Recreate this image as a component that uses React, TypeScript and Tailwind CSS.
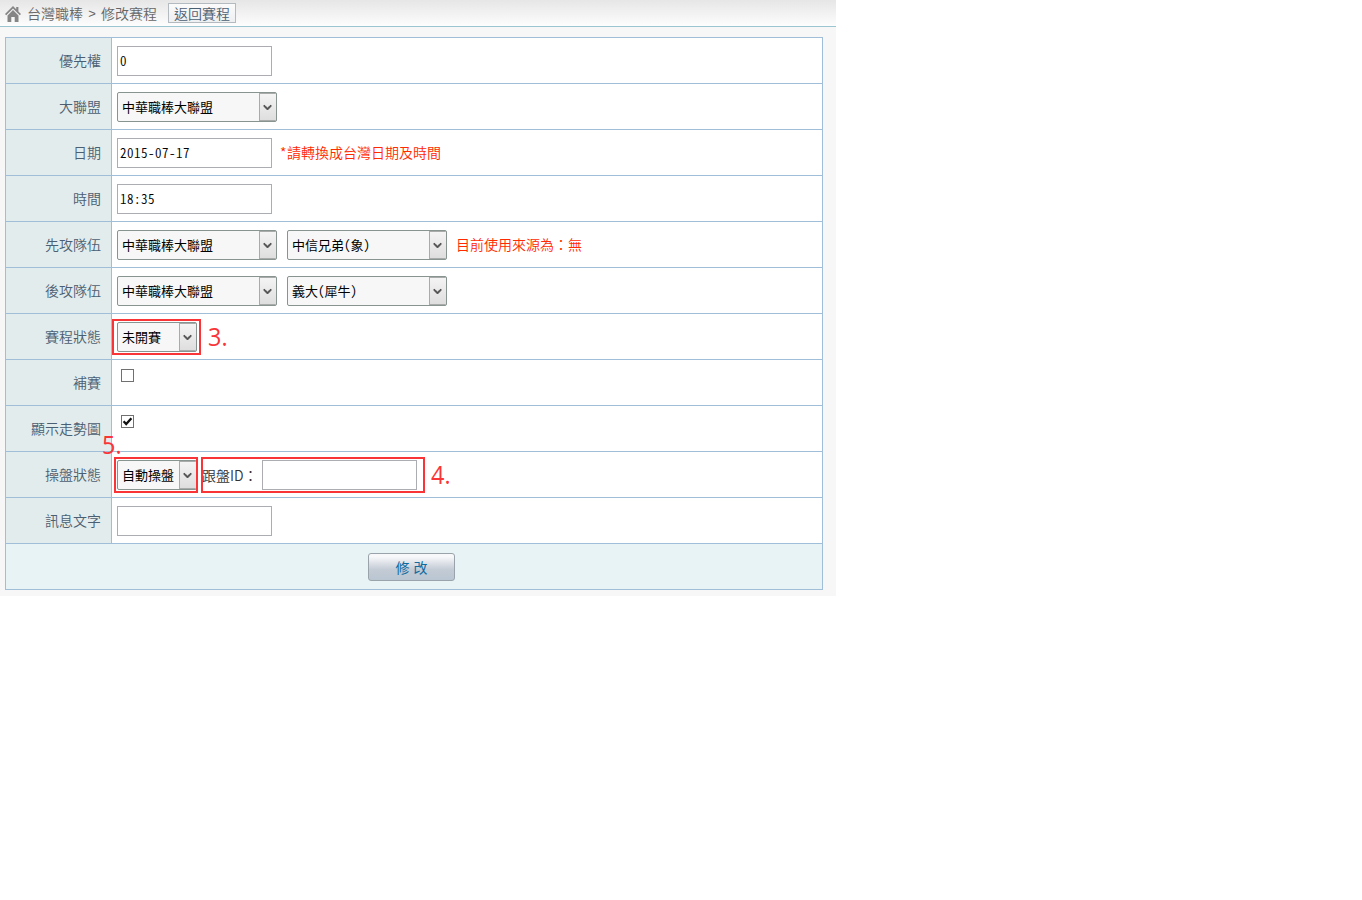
import { useState, type ReactNode } from "react";

function TextField({ value = "" }: { value?: string }) {
  const [text, setText] = useState(value);
  return (
    <input
      value={text}
      onChange={(e) => setText(e.target.value)}
      className="h-[30px] w-[155px] shrink-0 border border-[#abadb3] bg-white pl-[2px] text-[13px] tracking-[0.5px] text-black outline-none [font-feature-settings:'hwid']"
    />
  );
}

function SelectBox({ label, small = false }: { label: string; small?: boolean }) {
  return (
    <div
      className={`flex h-[30px] shrink-0 overflow-hidden rounded-[2px] border border-[#87948f] bg-[#f7f7f7] ${
        small ? "w-[80px]" : "w-[160px]"
      }`}
    >
      <span className="flex flex-1 items-center whitespace-nowrap pl-[4px] text-[13px] font-normal leading-none text-black [font-feature-settings:'hwid']">
        {label}
      </span>
      <span className="flex w-[17px] shrink-0 items-center justify-center border border-r-0 border-[#a9abab] bg-linear-to-b from-[#f4f4f4] to-[#dedede] pr-[2px] pt-px">
        <svg width="9" height="7" viewBox="0 0 9 7" fill="none">
          <path d="M1 1v1.4L4.5 6 8 2.4V1L4.5 4z" fill="#505050" stroke="#505050" strokeWidth=".9" />
        </svg>
      </span>
    </div>
  );
}

function CheckBox({ checked = false }: { checked?: boolean }) {
  const [on, setOn] = useState(checked);
  return (
    <button
      role="checkbox"
      aria-checked={on}
      onClick={() => setOn(!on)}
      className="ml-[4px] mt-[9px] flex size-[13px] items-center justify-center self-start border border-[#707070] bg-white"
    >
      {on && (
        <svg width="11" height="11" viewBox="0 0 11 11" fill="none" className="shrink-0">
          <path d="M1.6 5.2 4.2 8 9.4 2.2" stroke="#111" strokeWidth="2.3" />
        </svg>
      )}
    </button>
  );
}

function Note({ children }: { children: ReactNode }) {
  return <span className="ml-[9px] whitespace-nowrap pb-px text-[14px] leading-none text-[#ff2a00]">{children}</span>;
}

function Row({ label, children }: { label: string; children: ReactNode }) {
  return (
    <div className="flex h-[46px] border-b border-[#a0bed8]">
      <div className="flex w-[106px] items-center justify-end border-r border-[#a0bed8] bg-[#e2ecec] pb-px pr-[10px] text-[14px] leading-none text-[#4b5f73]">
        {label}
      </div>
      <div className="flex flex-1 items-center bg-white pl-[5px]">{children}</div>
    </div>
  );
}

export default function App() {
  return (
    <div className="min-h-[900px] bg-white">
      <div className="relative h-[596px] w-[836px] bg-[#f7f7f7] font-['Noto_Sans_CJK_TC',sans-serif] font-[350]">
        <header className="flex h-[27px] items-center border-b border-[#9cc5d2] bg-linear-to-b from-[#e6e6e6] to-[#fdfdfd] pl-[5px] text-[14px] leading-none text-[#666]">
          <svg width="16" height="17" viewBox="0 0 16 17" className="mt-[3px] shrink-0" fill="#858585">
            <path d="M8 0 0 8l1.2 1.2L8 2.5l6.8 6.7L16 8l-2.6-2.6V1h-2.2v2.2z" />
            <path d="M8 4 2.5 9.4V16H6.3v-5h3.4v5h3.8V9.4z" />
          </svg>
          <span className="ml-[6px] whitespace-nowrap">台灣職棒</span>
          <span className="w-[18px] text-center font-['Liberation_Sans',sans-serif] text-[13px]">&gt;</span>
          <span className="whitespace-nowrap">修改赛程</span>
          <button className="ml-[11px] flex h-[20px] w-[68px] items-center justify-center border border-[#b4bbc0] bg-linear-to-b from-[#fbfbfb] to-[#eeeff1] pb-px text-[14px] leading-none text-[#4b5f73]">
            返回賽程
          </button>
        </header>

        <main className="ml-[5px] mt-[10px] w-[818px] border border-b-0 border-[#a0bed8]">
          <Row label="優先權">
            <TextField value="0" />
          </Row>
          <Row label="大聯盟">
            <SelectBox label="中華職棒大聯盟" />
          </Row>
          <Row label="日期">
            <TextField value="2015-07-17" />
            <Note><span className="inline-block w-[6px] -indent-px">*</span>請轉換成台灣日期及時間</Note>
          </Row>
          <Row label="時間">
            <TextField value="18:35" />
          </Row>
          <Row label="先攻隊伍">
            <div className="flex gap-[10px]">
              <SelectBox label="中華職棒大聯盟" />
              <SelectBox label="中信兄弟(象)" />
            </div>
            <Note>目前使用來源為：無</Note>
          </Row>
          <Row label="後攻隊伍">
            <div className="flex gap-[10px]">
              <SelectBox label="中華職棒大聯盟" />
              <SelectBox label="義大(犀牛)" />
            </div>
          </Row>
          <Row label="賽程狀態">
            <SelectBox label="未開賽" small />
          </Row>
          <Row label="補賽">
            <CheckBox />
          </Row>
          <Row label="顯示走勢圖">
            <CheckBox checked />
          </Row>
          <Row label="操盤狀態">
            <SelectBox label="自動操盤" small />
            <span className="ml-[5px] w-[60px] whitespace-nowrap text-[14px] leading-none text-[#333]">跟盤ID：</span>
            <TextField />
          </Row>
          <Row label="訊息文字">
            <TextField />
          </Row>
          <div className="flex h-[46px] items-center justify-center border-b border-[#a0bed8] bg-[#e7f3f5] pr-[5px]">
            <button className="mt-px flex h-[28px] w-[87px] items-center justify-center rounded-[3px] border border-[#9ba3aa] bg-linear-to-b from-[#f8f8fa] from-10% via-[#c3cbd5] via-60% to-[#b9c6d2] pb-px text-[14px] font-normal leading-none text-[#116b9f] [word-spacing:1px]">
              修 改
            </button>
          </div>
        </main>

        <div className="pointer-events-none absolute left-[112px] top-[319px] h-[36px] w-[89px] border-2 border-[#fa3538]" />
        <div className="pointer-events-none absolute left-[114px] top-[457px] h-[36px] w-[84px] border-2 border-[#fa3538]" />
        <div className="pointer-events-none absolute left-[201px] top-[457px] h-[36px] w-[224px] border-2 border-[#fa3538]" />
        <span className="absolute left-[208px] top-[324px] origin-left scale-x-90 font-['Open_Sans',sans-serif] text-[26px] font-medium leading-[24px] text-[#fa3538]">3.</span>
        <span className="absolute left-[102px] top-[432px] origin-left scale-x-90 font-['Open_Sans',sans-serif] text-[26px] font-medium leading-[24px] text-[#fa3538]">5.</span>
        <span className="absolute left-[431px] top-[462px] origin-left scale-x-90 font-['Open_Sans',sans-serif] text-[26px] font-medium leading-[24px] text-[#fa3538]">4.</span>
      </div>
    </div>
  );
}
